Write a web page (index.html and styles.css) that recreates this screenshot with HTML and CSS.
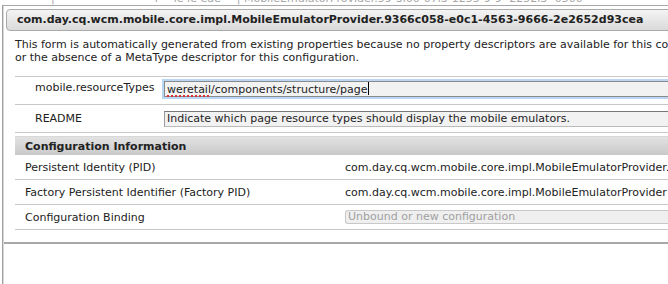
FILE: index.html
```html
<!DOCTYPE html>
<html>
<head>
<meta charset="utf-8">
<link rel="stylesheet" href="styles.css">
</head>
<body>
<div class="strip">
  <span class="s1">|</span><span class="s2">l</span><span class="s3">ie ie eae</span><span class="s4">| MobileEmulatorProvider.59-3l60-07l3-1255-9-9-  2252l3-  0500</span>
</div>
<div class="dialog">
  <div class="title">com.day.cq.wcm.mobile.core.impl.MobileEmulatorProvider.9366c058-e0c1-4563-9666-2e2652d93cea</div>
  <div class="content">
    <p class="desc">This form is automatically generated from existing properties because no property descriptors are available for this configuration,<br>or the absence of a MetaType descriptor for this configuration.</p>
    <div class="props">
      <div class="prow first">
        <div class="plabel">mobile.resourceTypes</div>
        <div class="pval"><div class="input focus"><span class="spell">weretail</span>/components/structure/page<span class="caret"></span></div></div>
      </div>
      <div class="prow">
        <div class="plabel">README</div>
        <div class="pval"><div class="input readme">Indicate which page resource types should display the mobile emulators.</div></div>
      </div>
    </div>
    <div class="section">Configuration Information</div>
    <div class="crow">
      <div class="clabel">Persistent Identity (PID)</div>
      <div class="cval">com.day.cq.wcm.mobile.core.impl.MobileEmulatorProvider.9366c058-e0c1-4563-9666-2e2652d93cea</div>
    </div>
    <div class="crow">
      <div class="clabel">Factory Persistent Identifier (Factory PID)</div>
      <div class="cval">com.day.cq.wcm.mobile.core.impl.MobileEmulatorProvider</div>
    </div>
    <div class="crow">
      <div class="clabel">Configuration Binding</div>
      <div class="cval"><div class="select">Unbound or new configuration</div></div>
    </div>
  </div>
  <div class="footer"></div>
</div>
</body>
</html>
```
FILE: styles.css
```css
html, body {
  margin: 0;
  padding: 0;
  background: #fff;
  overflow: hidden;
  width: 668px;
  height: 284px;
}
body {
  font-family: "DejaVu Sans", Verdana, sans-serif;
  font-size: 11px;
  color: #222;
}
.strip {
  height: 5px;
  overflow: hidden;
  display: flex;
  white-space: nowrap;
  font-size: 11px;
  line-height: 13px;
  color: #a8a8a8;
}
.strip span {
  margin-top: -8px;
  display: block;
}
.s1 { margin-left: 51px; }
.s2 { margin-left: 100px; }
.s3 { margin-left: 16px; }
.s4 { margin-left: 16px; }
.dialog {
  width: 760px;
  margin-left: 2px;
  border-left: 1px solid #a0a0a0;
  border-top: 1px solid #a8a8a8;
  height: 300px;
  box-shadow: inset 1px 0 0 #d8d8d8;
}
.title {
  margin: 3px 0 0 3px;
  height: 20px;
  line-height: 20px;
  border: 1px solid #aaa;
  border-radius: 4px;
  background: linear-gradient(#f4f4f4, #dadada);
  font-weight: bold;
  font-size: 11px;
  color: #222;
  padding-left: 10px;
  white-space: nowrap;
  overflow: hidden;
}
.content {
  padding-left: 12px;
}
.desc {
  margin: 7px 0 0 0;
  line-height: 13px;
  white-space: nowrap;
  padding-bottom: 12px;
  border-bottom: 1px solid #c8c8c8;
}
.prow {
  display: flex;
  align-items: center;
  border-bottom: 1px solid #c8c8c8;
  height: 27px;
}
.prow.first {
  height: 28px;
  align-items: flex-start;
  padding-top: 3px;
  box-sizing: border-box;
}
.plabel {
  flex-shrink: 0;
  width: 127px;
  padding-left: 20px;
  font-size: 11px;
  line-height: 15px;
  white-space: nowrap;
}
.pval {
  flex: 1;
  min-width: 0;
}
.input {
  white-space: nowrap;
  font-size: 11px;
  background: #f2f2f2;
  border: 1px solid #999;
  border-right: none;
  padding-left: 2px;
  height: 14px;
  line-height: 14px;
}
.input.focus {
  border-color: #8a8a8a;
  box-shadow: 0 0 0 2px #b9d6f4;
  margin-top: 1px;
  margin-left: 2px;
  height: 14px;
  line-height: 15px;
}
.input.readme {
  margin-left: 2px;
  border-top-color: #777;
  border-bottom-color: #bbb;
}
.spell {
  text-decoration: underline dotted #e03030;
  text-decoration-thickness: 2px;
  text-underline-offset: 2px;
}
.caret {
  display: inline-block;
  width: 1px;
  height: 13px;
  background: #000;
  vertical-align: -2px;
  margin-left: 1px;
}
.section {
  margin-top: 3px;
  height: 18px;
  line-height: 19px;
  background: linear-gradient(#e2e2e2, #c9c9c9);
  font-weight: bold;
  font-size: 11px;
  padding-left: 10px;
  border-top: 1px solid #d8d8d8;
}
.crow {
  display: flex;
  align-items: center;
  height: 24px;
  border-bottom: 1px solid #c8c8c8;
}
.clabel {
  flex-shrink: 0;
  width: 320px;
  padding-left: 10px;
  white-space: nowrap;
  font-size: 11px;
}
.cval {
  flex: 1;
  min-width: 0;
  white-space: nowrap;
  font-size: 11px;
}
.select {
  height: 12px;
  line-height: 12px;
  border: 1px solid #c8c8c8;
  border-right: none;
  border-radius: 3px 0 0 3px;
  background: #efefef;
  color: #a0a0a0;
  padding-left: 2px;
}
.footer {
  margin-top: 12px;
  margin-left: 1px;
  border-top: 2px solid #a8a8a8;
}
```
